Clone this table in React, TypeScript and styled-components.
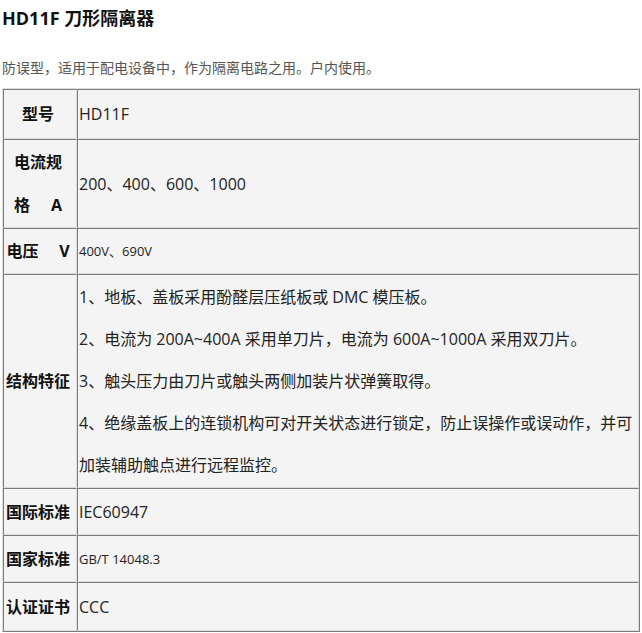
import React from "react";
import styled, { createGlobalStyle } from "styled-components";

const GlobalStyle = createGlobalStyle`
  html, body {
    margin: 0;
    padding: 0;
    background: #ffffff;
  }
  body {
    font-family: "Open Sans", "Noto Sans CJK SC", sans-serif;
    color: #222;
  }
`;

const Page = styled.div`
  width: 638px;
  padding: 0 0 0 2px;
`;

const Title = styled.h1`
  margin: 6px 0 0;
  font-size: 18px;
  line-height: 24px;
  font-weight: 700;
  color: #111;
`;

const Lead = styled.p`
  margin: 28px 0 10px;
  font-size: 14px;
  line-height: 20px;
  color: #555;
`;

const Table = styled.table`
  width: 638px;
  table-layout: fixed;
  border-collapse: separate;
  border-spacing: 0;
  background: #f4f4f4;
  border-style: solid;
  border-width: 1px;
  border-color: #dcdcdc #7c7c7c #7c7c7c #dcdcdc;
`;

const Row = styled.tr<{ $h: number }>`
  height: ${(p) => p.$h}px;
`;

const Cell = styled.td`
  box-sizing: border-box;
  border-style: solid;
  border-width: 1px;
  border-color: #7c7c7c #dcdcdc #dcdcdc #7c7c7c;
  vertical-align: middle;
  padding: 0 1px;
`;

const LabelCell = styled(Cell)<{ $lh?: number }>`
  width: 74px;
  padding: 0 4px 0 0;
  text-align: center;
  font-weight: 700;
  font-size: 16px;
  line-height: ${(p) => p.$lh ?? 24}px;
  color: #111;
  white-space: normal;
`;

const ValueCell = styled(Cell)<{ $size?: number }>`
  font-size: ${(p) => p.$size ?? 16}px;
  line-height: 24px;
  color: #222;
`;

const Item = styled.div`
  line-height: 42px;
  font-size: 16px;
`;

const features = [
  "1、地板、盖板采用酚醛层压纸板或 DMC 模压板。",
  "2、电流为 200A~400A 采用单刀片，电流为 600A~1000A 采用双刀片。",
  "3、触头压力由刀片或触头两侧加装片状弹簧取得。",
  "4、绝缘盖板上的连锁机构可对开关状态进行锁定，防止误操作或误动作，并可加装辅助触点进行远程监控。",
];

const gap = "\u00a0\u00a0\u00a0\u00a0\u00a0";

export default function App() {
  return (
    <>
      <GlobalStyle />
      <Page>
        <Title>HD11F 刀形隔离器</Title>
        <Lead>防误型，适用于配电设备中，作为隔离电路之用。户内使用。</Lead>
        <Table>
          <tbody>
            <Row $h={50}>
              <LabelCell>型号</LabelCell>
              <ValueCell>HD11F</ValueCell>
            </Row>
            <Row $h={89}>
              <LabelCell $lh={43}>
                电流规
                <br />
                格{gap}A
              </LabelCell>
              <ValueCell>200、400、600、1000</ValueCell>
            </Row>
            <Row $h={46}>
              <LabelCell>电压{gap}V</LabelCell>
              <ValueCell $size={13}>400V、690V</ValueCell>
            </Row>
            <Row $h={214}>
              <LabelCell>结构特征</LabelCell>
              <ValueCell>
                {features.map((f) => (
                  <Item key={f}>{f}</Item>
                ))}
              </ValueCell>
            </Row>
            <Row $h={47}>
              <LabelCell>国际标准</LabelCell>
              <ValueCell>IEC60947</ValueCell>
            </Row>
            <Row $h={47}>
              <LabelCell>国家标准</LabelCell>
              <ValueCell $size={13}>GB/T 14048.3</ValueCell>
            </Row>
            <Row $h={49}>
              <LabelCell>认证证书</LabelCell>
              <ValueCell>CCC</ValueCell>
            </Row>
          </tbody>
        </Table>
      </Page>
    </>
  );
}
